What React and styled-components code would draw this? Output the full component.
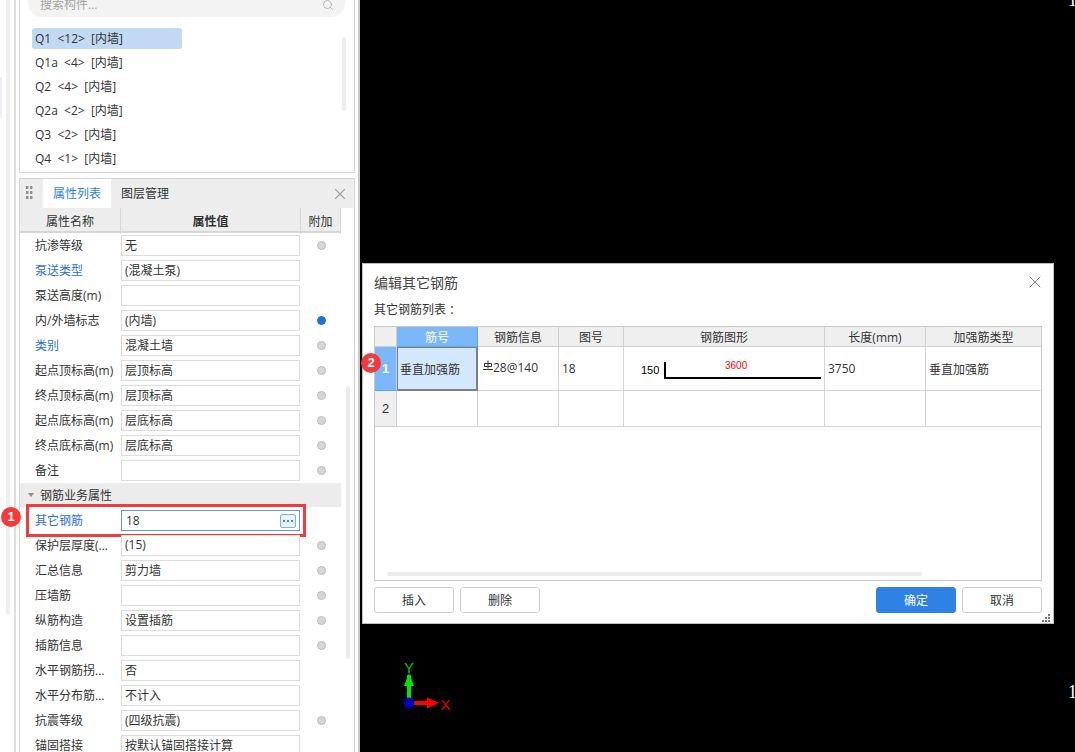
import React from 'react';
import styled, { createGlobalStyle } from 'styled-components';
import { Search, X } from 'lucide-react';

const GlobalStyle = createGlobalStyle`
  html, body {
    margin: 0;
    padding: 0;
    height: 100%;
    overflow: hidden;
    background: #000;
  }
  * {
    box-sizing: border-box;
  }
  body {
    font-family: "Open Sans", "Noto Sans CJK SC", sans-serif;
    font-size: 12px;
    color: #333;
  }
`;

const Page = styled.div`
  display: flex;
  width: 100%;
  height: 100vh;
  overflow: hidden;
`;

const Sidebar = styled.aside`
  display: flex;
  flex: none;
  width: 360px;
  height: 100%;
  background: #fff;
  border-right: 2px solid #c9c9c9;
`;

const Rail = styled.div`
  display: flex;
  flex: none;
  width: 19px;
`;

const RailMark = styled.div`
  width: 2px;
  height: 41px;
  margin-top: 77px;
  background: #eeeef6;
`;

const RailThumb = styled.div`
  width: 4px;
  height: 615px;
  margin-left: 4px;
  background: #efefef;
  border-radius: 0 0 2px 2px;
`;

const RailLine = styled.div`
  width: 2px;
  margin-left: 4px;
  background: #dedede;
`;

const Column = styled.div`
  display: flex;
  flex-direction: column;
  flex: none;
  width: 336px;
  gap: 5px;
`;

const ComponentPanel = styled.section`
  position: relative;
  flex: none;
  height: 173px;
  padding-left: 8px;
  border: 1px solid #d6d6d6;
  border-top: 0;
`;

const SearchBox = styled.div`
  display: flex;
  align-items: center;
  justify-content: space-between;
  width: 317px;
  height: 17px;
  padding: 0 11px 7px 12px;
  background: #f3f3f3;
  border-radius: 0 0 14px 14px;
  color: #a3a3a3;
  font-size: 12px;
  line-height: 10px;
`;

const ComponentList = styled.ul`
  list-style: none;
  margin: 11px 0 0 4px;
  padding: 0;
  display: flex;
  flex-direction: column;
  gap: 3px;
`;

const ComponentItem = styled.li`
  width: 150px;
  height: 21px;
  padding-left: 3px;
  line-height: 22px;
  white-space: pre;
  border-radius: 3px;
  background: ${(p) => (p.$active ? '#c1d9f2' : 'transparent')};
`;

const ScrollThumb = styled.div`
  position: absolute;
  left: ${(p) => p.$left}px;
  top: ${(p) => p.$top}px;
  width: 4px;
  height: ${(p) => p.$height}px;
  background: #ececec;
  border-radius: 2px;
`;

const PropertyPanel = styled.section`
  position: relative;
  flex: 1;
  min-height: 0;
  border: 1px solid #d6d6d6;
  border-bottom: 0;
`;

const TabBar = styled.div`
  display: flex;
  align-items: stretch;
  height: 29px;
  background: #ededee;
  padding-left: 6px;
`;

const Grip = styled.svg`
  flex: none;
  width: 7px;
  height: 15px;
  margin: 7px 10px 0 0;
`;

const Tab = styled.div`
  width: ${(p) => p.$width}px;
  padding-left: 10px;
  line-height: 29px;
  background: ${(p) => (p.$active ? '#fff' : 'transparent')};
  color: ${(p) => (p.$active ? '#2f7fe8' : '#333')};
`;

const TabClose = styled.div`
  display: flex;
  align-items: center;
  margin-left: auto;
  padding-right: 5px;
  color: #a2a2a2;
`;

const RowGrid = styled.div`
  display: grid;
  grid-template-columns: 101px 180px 40px;
  width: 321px;
`;

const HeaderRow = styled(RowGrid)`
  height: 25px;
  background: #ededed;
  border-bottom: 2px solid #d6d6d6;
`;

const HeaderCell = styled.div`
  padding-top: 1px;
  text-align: center;
  line-height: 25px;
  font-weight: ${(p) => (p.$bold ? 700 : 400)};
  border-right: 1px solid #d6d6d6;
`;

const PropertyRow = styled(RowGrid)`
  position: relative;
  height: 25px;
  align-items: center;
`;

const Label = styled.div`
  padding: 0 0 2px 15px;
  white-space: nowrap;
  color: ${(p) => (p.$link ? '#2b6fd6' : '#333')};
`;

const Field = styled.div`
  display: flex;
  align-items: center;
  justify-content: space-between;
  width: 179px;
  height: 21px;
  padding: 0 3px 2px;
  white-space: nowrap;
  background: #fff;
  border: 1px solid ${(p) => (p.$focus ? '#6a96dc' : '#dcdcdc')};
  ${(p) => p.$focus && 'padding: 0 3px 0 4px;'}
`;

const MoreButton = styled.div`
  display: flex;
  align-items: center;
  justify-content: center;
  gap: 2px;
  width: 16px;
  height: 14px;
  background: #e9f1fb;
  border: 1px solid #7db1ef;
  border-radius: 2px;

  i {
    width: 2px;
    height: 2px;
    background: #3f86e2;
  }
`;

const Dot = styled.div`
  justify-self: center;
  width: 9px;
  height: 9px;
  margin-bottom: 1px;
  border-radius: 50%;
  background: ${(p) => (p.$on ? '#1f6fd6' : '#d6d6da')};
  border: 1px solid ${(p) => (p.$on ? '#1f6fd6' : '#bdbdc1')};
`;

const GroupRow = styled.div`
  display: flex;
  align-items: center;
  gap: 6px;
  width: 321px;
  height: 24px;
  margin-bottom: 1px;
  padding-left: 8px;
  background: #ececec;

  &::before {
    content: '';
    border-style: solid;
    border-width: 4px 3px 0 3px;
    border-color: #8d8d8d transparent transparent transparent;
  }
`;

const Highlight = styled.div`
  position: absolute;
  left: 6px;
  top: -4px;
  width: 280px;
  height: 33px;
  border: 3px solid #f43a3a;
  pointer-events: none;
`;

const Badge = styled.div`
  position: absolute;
  left: ${(p) => p.$left}px;
  top: ${(p) => p.$top}px;
  width: 20px;
  height: 20px;
  border-radius: 50%;
  background: #f43a3a;
  color: #fff;
  font-family: "Liberation Sans", sans-serif;
  font-weight: 700;
  font-size: 13px;
  line-height: 20px;
  text-align: center;
`;

const Canvas = styled.main`
  position: relative;
  flex: 1;
  background: #000;
`;

const EdgeMark = styled.div`
  position: absolute;
  right: -2px;
  top: ${(p) => p.$top}px;
  color: #fff;
  font-family: "Liberation Serif", serif;
  font-size: 18px;
  line-height: 18px;
`;

const Axes = styled.svg`
  position: absolute;
  left: 40px;
  top: 655px;
  width: 60px;
  height: 60px;
`;

const Dialog = styled.div`
  position: absolute;
  left: 2px;
  top: 263px;
  display: flex;
  flex-direction: column;
  width: 692px;
  height: 361px;
  padding: 0 11px;
  background: #fff;
  border: 1px solid #bdbdbd;
`;

const DialogHead = styled.div`
  display: flex;
  align-items: center;
  justify-content: space-between;
  flex: none;
  height: 36px;
  font-size: 14px;
  color: #444;
  svg {
    margin-right: -3px;
    color: #8a8a8a;
  }
`;

const ListLabel = styled.div`
  flex: none;
  height: 26px;
  padding-top: 1px;
  line-height: 18px;
`;

const TableBox = styled.div`
  flex: none;
  height: 255px;
  position: relative;
  border: 1px solid #c8c8c8;
`;

const Table = styled.table`
  width: 666px;
  table-layout: fixed;
  border-collapse: separate;
  border-spacing: 0;
`;

const HeadCell = styled.th`
  height: 20px;
  padding: 0;
  font-weight: 400;
  text-align: center;
  background: ${(p) => (p.$active ? '#7ab8fb' : '#efefef')};
  color: ${(p) => (p.$active ? '#fff' : '#333')};
  border-right: 1px solid ${(p) => (p.$active ? '#5aa5f5' : '#cfcfcf')};
  border-bottom: 1px solid ${(p) => (p.$active ? '#5aa5f5' : '#cfcfcf')};
  &:last-child {
    border-right: 0;
  }
`;

const RowHead = styled.td`
  padding: 0;
  text-align: center;
  font-family: "Liberation Sans", sans-serif;
  font-size: 13px;
  font-weight: ${(p) => (p.$active ? 700 : 400)};
  background: ${(p) => (p.$active ? '#7ab8fb' : '#efefef')};
  color: ${(p) => (p.$active ? '#fff' : '#333')};
  border-right: 1px solid #cfcfcf;
  border-bottom: 1px solid ${(p) => (p.$active ? '#5aa5f5' : '#cfcfcf')};
`;

const Cell = styled.td`
  padding: 0 3px;
  height: ${(p) => p.$height}px;
  white-space: nowrap;
  border-right: 1px solid #d4d4d4;
  border-bottom: 1px solid #d4d4d4;
  &:last-child {
    border-right: 0;
  }
`;

const SelectedCell = styled(Cell)`
  background: #d4e8fd;
  border: 0;
  box-shadow: inset 1px 1px 0 #808080, inset -2px -2px 0 #808080;
`;

const SteelCell = styled(Cell)`
  padding: 0 0 3px 5px;
`;

const SteelMark = styled.svg`
  width: 10px;
  height: 11px;
  vertical-align: 1px;
`;

const ShapeCell = styled(Cell)`
  padding: 0;
`;

const ShapeDrawing = styled.svg`
  display: block;
  width: 200px;
  height: 43px;
`;

const HScroll = styled.div`
  position: absolute;
  left: 12px;
  bottom: 4px;
  width: 535px;
  height: 4px;
  background: #ebebeb;
  border-radius: 2px;
`;

const DialogFooter = styled.div`
  display: flex;
  gap: 6px;
  margin-top: 6px;
`;

const Spacer = styled.div`
  flex: 1;
`;

const Button = styled.button`
  width: 80px;
  height: 26px;
  padding: 0;
  font: inherit;
  border-radius: 3px;
  border: 1px solid ${(p) => (p.$primary ? '#2e82e4' : '#cfcfcf')};
  background: ${(p) => (p.$primary ? '#2e82e4' : '#fff')};
  color: ${(p) => (p.$primary ? '#fff' : '#333')};
`;

const ResizeGrip = styled.svg`
  position: absolute;
  right: 3px;
  bottom: 1px;
  width: 8px;
  height: 8px;
`;

const components = [
  { name: 'Q1  <12>  [内墙]', active: true },
  { name: 'Q1a  <4>  [内墙]' },
  { name: 'Q2  <4>  [内墙]' },
  { name: 'Q2a  <2>  [内墙]' },
  { name: 'Q3  <2>  [内墙]' },
  { name: 'Q4  <1>  [内墙]' },
];

const topRows = [
  { label: '抗渗等级', value: '无', dot: true },
  { label: '泵送类型', value: '(混凝土泵)', link: true },
  { label: '泵送高度(m)', value: '' },
  { label: '内/外墙标志', value: '(内墙)', dot: true, on: true },
  { label: '类别', value: '混凝土墙', dot: true, link: true },
  { label: '起点顶标高(m)', value: '层顶标高', dot: true },
  { label: '终点顶标高(m)', value: '层顶标高', dot: true },
  { label: '起点底标高(m)', value: '层底标高', dot: true },
  { label: '终点底标高(m)', value: '层底标高', dot: true },
  { label: '备注', value: '', dot: true },
];

const bottomRows = [
  { label: '保护层厚度(...', value: '(15)', dot: true },
  { label: '汇总信息', value: '剪力墙', dot: true },
  { label: '压墙筋', value: '', dot: true },
  { label: '纵筋构造', value: '设置插筋', dot: true },
  { label: '插筋信息', value: '', dot: true },
  { label: '水平钢筋拐...', value: '否' },
  { label: '水平分布筋...', value: '不计入' },
  { label: '抗震等级', value: '(四级抗震)', dot: true },
  { label: '锚固搭接', value: '按默认锚固搭接计算' },
];

const columns = [22, 81, 81, 65, 201, 101, 115];

const Row = ({ row }) => (
  <PropertyRow>
    <Label $link={row.link}>{row.label}</Label>
    <Field>{row.value}</Field>
    {row.dot ? <Dot $on={row.on} /> : <span />}
  </PropertyRow>
);

const App = () => {
  return (
    <Page>
      <GlobalStyle />
      <Sidebar>
        <Rail>
          <RailMark />
          <RailThumb />
          <RailLine />
        </Rail>
        <Column>
          <ComponentPanel>
            <SearchBox>
              <span>搜索构件...</span>
              <Search size={12} strokeWidth={1.5} />
            </SearchBox>
            <ComponentList>
              {components.map((item) => (
                <ComponentItem key={item.name} $active={item.active}>
                  {item.name}
                </ComponentItem>
              ))}
            </ComponentList>
            <ScrollThumb $left={322} $top={38} $height={73} />
          </ComponentPanel>
          <PropertyPanel>
            <TabBar>
              <Grip viewBox="0 0 7 15">
                {[0, 5, 10].map((y) =>
                  [0, 4].map((x) => (
                    <rect key={`${x}-${y}`} x={x} y={y} width="2.4" height="3" fill="#8f8f8f" />
                  ))
                )}
              </Grip>
              <Tab $active $width={68}>属性列表</Tab>
              <Tab $width={80}>图层管理</Tab>
              <TabClose>
                <X size={18} strokeWidth={1.5} />
              </TabClose>
            </TabBar>
            <HeaderRow>
              <HeaderCell>属性名称</HeaderCell>
              <HeaderCell $bold>属性值</HeaderCell>
              <HeaderCell>附加</HeaderCell>
            </HeaderRow>
            {topRows.map((row) => (
              <Row key={row.label} row={row} />
            ))}
            <GroupRow>钢筋业务属性</GroupRow>
            <PropertyRow>
              <Label $link>其它钢筋</Label>
              <Field $focus>
                18
                <MoreButton>
                  <i />
                  <i />
                  <i />
                </MoreButton>
              </Field>
              <span />
              <Highlight />
              <Badge $left={-19} $top={-1}>1</Badge>
            </PropertyRow>
            {bottomRows.map((row) => (
              <Row key={row.label} row={row} />
            ))}
            <ScrollThumb $left={326} $top={207} $height={273} />
          </PropertyPanel>
        </Column>
      </Sidebar>
      <Canvas>
        <EdgeMark $top={-9}>1</EdgeMark>
        <EdgeMark $top={683}>1</EdgeMark>
        <Axes viewBox="0 0 60 60">
          <rect x="7" y="20" width="4" height="28" fill="#00e600" />
          <polygon points="9,18 14,31 4,31" fill="#00e600" />
          <rect x="12" y="46" width="16" height="4" fill="#ff0000" />
          <polygon points="39,48 27,42.5 27,53.5" fill="#ff0000" />
          <ellipse cx="9" cy="48" rx="5.5" ry="5.5" fill="#0000b4" />
          <text x="4" y="17.5" fontFamily="Liberation Sans" fontSize="15" fill="#00c800">Y</text>
          <text x="40.5" y="54.5" fontFamily="Liberation Sans" fontSize="15" fill="#e00000">X</text>
        </Axes>
        <Dialog>
          <DialogHead>
            <span>编辑其它钢筋</span>
            <X size={20} strokeWidth={1.2} />
          </DialogHead>
          <ListLabel>其它钢筋列表 ：</ListLabel>
          <TableBox>
            <Table>
              <colgroup>
                {columns.map((w, i) => (
                  <col key={i} width={w} />
                ))}
              </colgroup>
              <thead>
                <tr>
                  <HeadCell />
                  <HeadCell $active>筋号</HeadCell>
                  <HeadCell>钢筋信息</HeadCell>
                  <HeadCell>图号</HeadCell>
                  <HeadCell>钢筋图形</HeadCell>
                  <HeadCell>长度(mm)</HeadCell>
                  <HeadCell>加强筋类型</HeadCell>
                </tr>
              </thead>
              <tbody>
                <tr>
                  <RowHead $active>1</RowHead>
                  <SelectedCell $height={44}>垂直加强筋</SelectedCell>
                  <SteelCell $height={44}>
                    <SteelMark viewBox="0 0 10 11">
                      <path
                        d="M5 0.5V8.5M1.5 3.5H8.5V6.5H1.5ZM0 9.5H10"
                        fill="none"
                        stroke="#333"
                        strokeWidth="1"
                      />
                    </SteelMark>
                    28@140
                  </SteelCell>
                  <Cell $height={44}>18</Cell>
                  <ShapeCell $height={44}>
                    <ShapeDrawing viewBox="0 0 200 43">
                      <text x="17" y="27" fontFamily="Liberation Sans" fontSize="11" fill="#000">150</text>
                      <text x="101" y="22" fontFamily="Liberation Sans" fontSize="10" fill="#ff0000">3600</text>
                      <path d="M41 15V31H197" fill="none" stroke="#000" strokeWidth="2" />
                    </ShapeDrawing>
                  </ShapeCell>
                  <Cell $height={44}>3750</Cell>
                  <Cell $height={44}>垂直加强筋</Cell>
                </tr>
                <tr>
                  <RowHead>2</RowHead>
                  <Cell $height={36} />
                  <Cell $height={36} />
                  <Cell $height={36} />
                  <Cell $height={36} />
                  <Cell $height={36} />
                  <Cell $height={36} />
                </tr>
              </tbody>
            </Table>
            <HScroll />
          </TableBox>
          <DialogFooter>
            <Button>插入</Button>
            <Button>删除</Button>
            <Spacer />
            <Button $primary>确定</Button>
            <Button>取消</Button>
          </DialogFooter>
          <Badge $left={-2} $top={89}>2</Badge>
          <ResizeGrip viewBox="0 0 8 8">
            {[
              [6, 0],
              [3, 3],
              [6, 3],
              [0, 6],
              [3, 6],
              [6, 6],
            ].map(([x, y]) => (
              <rect key={`${x}-${y}`} x={x} y={y} width="2" height="2" fill="#777" />
            ))}
          </ResizeGrip>
        </Dialog>
      </Canvas>
    </Page>
  );
};

export default App;
